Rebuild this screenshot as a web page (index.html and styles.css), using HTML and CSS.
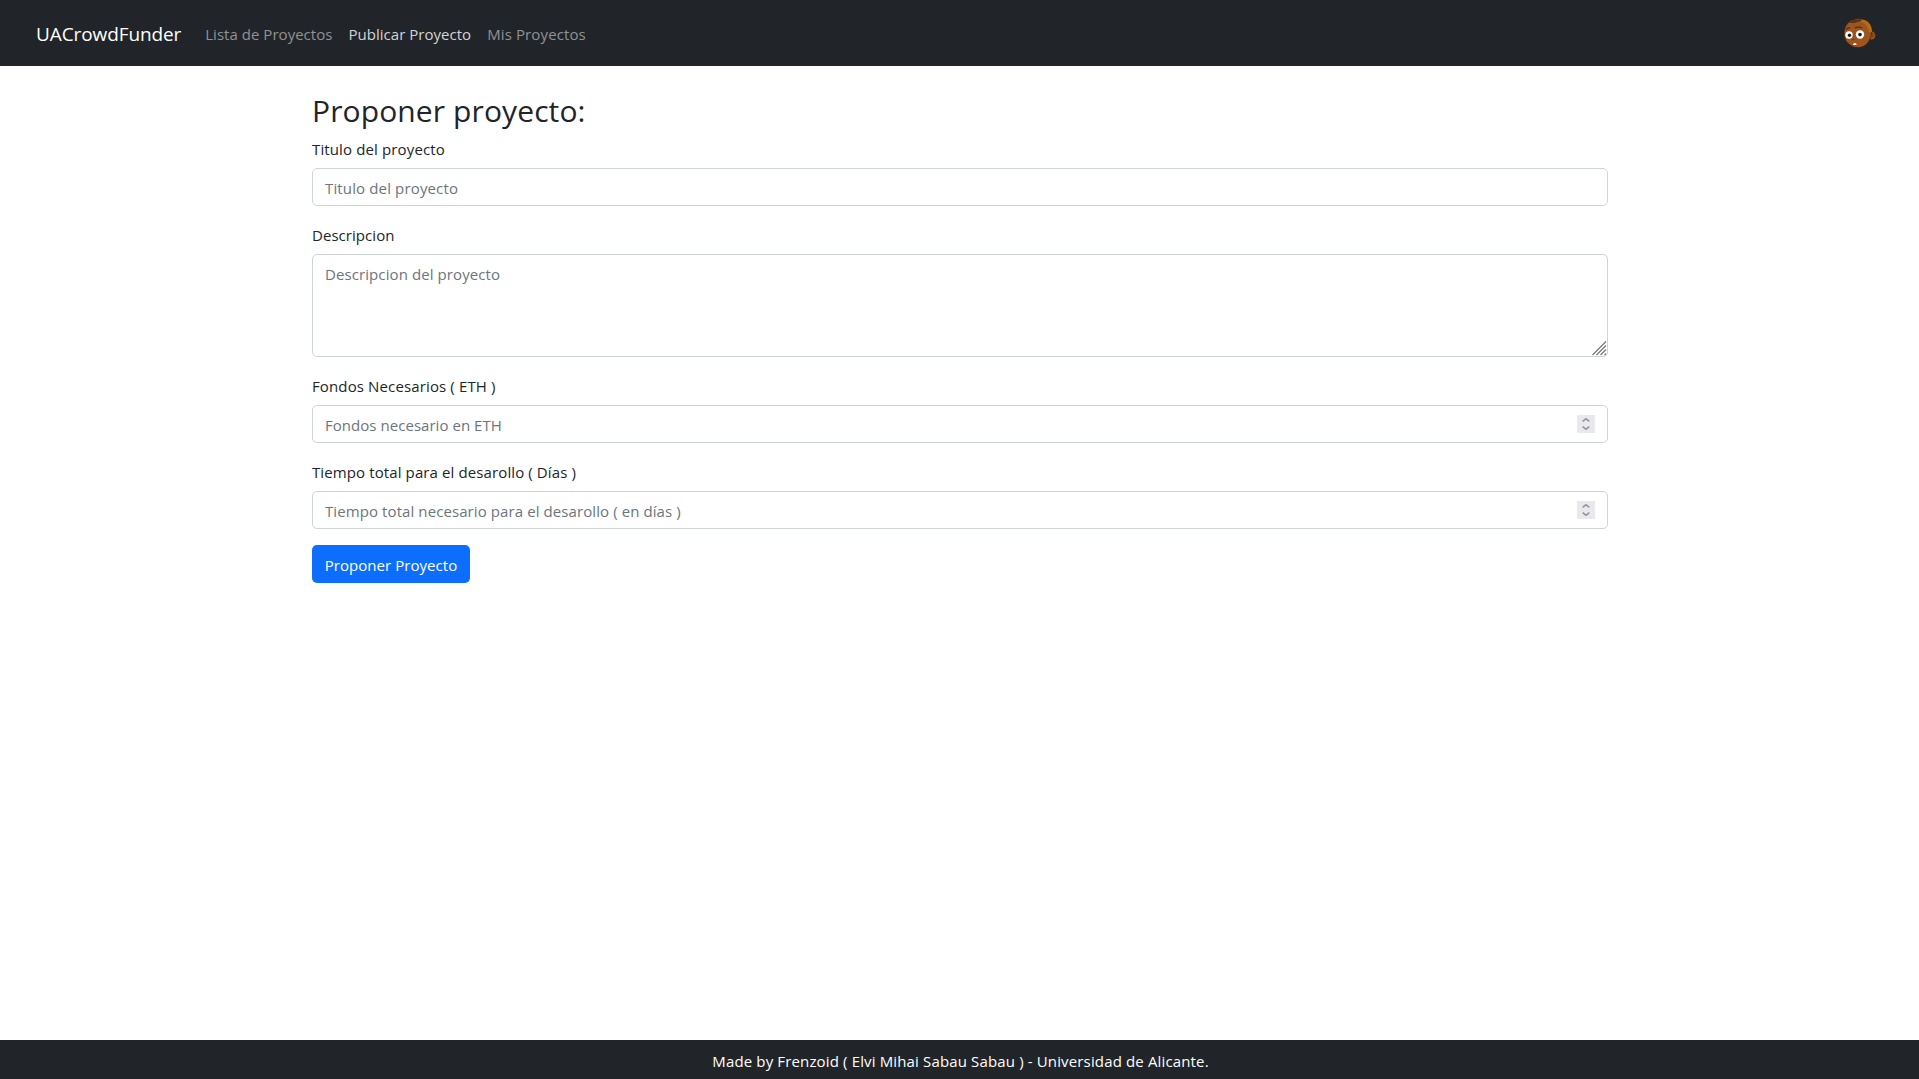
FILE: index.html
```html
<!DOCTYPE html>
<html lang="es">
<head>
<meta charset="utf-8">
<title>UACrowdFunder</title>
<link rel="stylesheet" href="styles.css">
</head>
<body>
<header class="navbar">
  <a class="brand">UACrowdFunder</a>
  <nav class="links">
    <a class="link">Lista de Proyectos</a>
    <a class="link active">Publicar Proyecto</a>
    <a class="link link-mine">Mis Proyectos</a>
  </nav>
  <svg class="avatar" width="34" height="32" viewBox="0 0 34 32">
    <ellipse cx="28.600" cy="18.500" rx="4" ry="4.400" fill="#9b561f" stroke="#382011" stroke-width=".7"/>
    <path d="M27.500 17.500q2-2 3 0q0 2-2 3" fill="none" stroke="#5b2d12" stroke-width=".8"/>
    <path d="M1 17C1 8 6 3 14 2C22 1 28 5 29 14L27.500 21C25 27 21 30.500 15.500 30.500C7 30.500 1 24 1 17Z" fill="#9b561f" stroke="#382011" stroke-width=".7"/>
    <path d="M7 5C12 1.500 20 1 25 5C28 8 29 11 29 15L26 15C25 10 23 7 19 5C14 4.500 10 5.500 7 5Z" fill="#b66c12"/>
    <path d="M6 6L10 3L19 2L18 4L11 6Z" fill="#573012"/>
    <path d="M3 12.500q2-2 4-1.500M12 11q3-2 7 0" fill="none" stroke="#4b260f" stroke-width="1.100"/>
    <circle cx="6" cy="18" r="3.700" fill="#fff"/>
    <circle cx="17" cy="17.500" r="4.200" fill="#fff"/>
    <circle cx="6.500" cy="18.300" r="1.700" fill="#151515"/>
    <circle cx="17" cy="17.600" r="1.800" fill="#151515"/>
    <path d="M9 22.500q2 1 3-1" fill="none" stroke="#633015" stroke-width=".8"/>
    <path d="M9 28q3-3 5 0l-1 1.500h-3z" fill="#d32920"/>
    <path d="M10 27q2-2 3.500 0v1h-3.500z" fill="#fff"/>
  </svg>
</header>
<main class="container">
  <h2 class="title">Proponer proyecto:</h2>
  <form>
    <div class="field">
      <label class="label" for="t">Titulo del proyecto</label>
      <input class="control c-title" id="t" placeholder="Titulo del proyecto">
    </div>
    <div class="field">
      <label class="label l-desc" for="d">Descripcion</label>
      <div class="wrap">
        <textarea class="control area" id="d" placeholder="Descripcion del proyecto"></textarea>
        <svg class="grip" width="15" height="15" viewBox="0 0 15 15"><path d="M.5 14L14 .5M4.500 14L14 4.500M8.500 14L14 8.500M12.500 14L14 12.500" stroke="#777" stroke-width="1.200"/></svg>
      </div>
    </div>
    <div class="field">
      <label class="label" for="f">Fondos Necesarios ( ETH )</label>
      <div class="wrap">
        <input class="control c-funds" id="f" placeholder="Fondos necesario en ETH">
        <svg class="spin" width="18" height="18" viewBox="0 0 18 18"><path d="M0 0h18v18H0z" fill="#e9e9ed"/><path d="M5.700 6.300L9 3.700L12.300 6.300M5.700 11.700L9 14.300L12.300 11.700" fill="none" stroke="#8f8f9d" stroke-width="1.500"/></svg>
      </div>
    </div>
    <div class="field">
      <label class="label l-time" for="p">Tiempo total para el desarollo ( Días )</label>
      <div class="wrap">
        <input class="control" id="p" placeholder="Tiempo total necesario para el desarollo ( en días )">
        <svg class="spin" width="18" height="18" viewBox="0 0 18 18"><path d="M0 0h18v18H0z" fill="#e9e9ed"/><path d="M5.700 6.300L9 3.700L12.300 6.300M5.700 11.700L9 14.300L12.300 11.700" fill="none" stroke="#8f8f9d" stroke-width="1.500"/></svg>
      </div>
    </div>
    <button class="button" type="button">Proponer Proyecto</button>
  </form>
</main>
<footer class="footer">Made by Frenzoid ( Elvi Mihai Sabau Sabau ) - Universidad de Alicante.</footer>
</body>
</html>
```
FILE: styles.css
```css
* { box-sizing: border-box; }
body {
  margin: 0;
  min-height: 100vh;
  display: flex;
  flex-direction: column;
  background: #fff;
  color: #212529;
  font: 400 15px/24px "Open Sans", "Noto Sans", sans-serif;
}
.navbar {
  height: 66px;
  padding: 0 42px 0 36px;
  display: flex;
  align-items: center;
  background: #212529;
}
.brand {
  margin-right: 24px;
  padding-top: 2px;
  color: #fff;
  font-size: 19px;
  line-height: 30px;
  letter-spacing: -.1px;
}
.links { display: flex; gap: 16px; flex: 1; padding-top: 2px; letter-spacing: .03px; }
.link { color: #909294; }
.link.active { color: #d3d3d4; }
.link-mine { letter-spacing: .12px; }
.container { margin: 0 311px 0 312px; padding-top: 24px; flex: 1; }
.title {
  margin: 0 0 6px;
  padding-top: 2px;
  font-size: 30px;
  font-weight: 400;
  line-height: 38px;
  letter-spacing: .11px;
}
.field { margin-bottom: 16px; }
.label { display: block; padding-top: 1px; margin-bottom: 7px; letter-spacing: .13px; }
.l-desc { letter-spacing: .05px; }
.l-time { letter-spacing: .11px; }
.wrap { position: relative; }
.control {
  display: block;
  width: 100%;
  height: 38px;
  margin: 0;
  padding: 7px 12px 5px;
  border: 1px solid #ced4da;
  border-radius: 5px;
  background: #fff;
  font: inherit;
  letter-spacing: .09px;
}
.c-title { letter-spacing: .14px; }
.c-funds { letter-spacing: .04px; }
.control::placeholder { color: #6c757d; opacity: 1; }
.area { height: 103px; resize: none; }
.grip { position: absolute; right: 1px; bottom: 1px; }
.spin { position: absolute; right: 13px; top: 10px; }
.button {
  display: block;
  width: 158px;
  height: 38px;
  padding: 2px 0 0;
  border: 0;
  border-radius: 5px;
  background: #0d6efd;
  color: #fff;
  font: inherit;
  letter-spacing: .05px;
}
.footer {
  height: 39px;
  padding-left: 2px;
  background: #212529;
  color: #fff;
  text-align: center;
  line-height: 42px;
  letter-spacing: .145px;
}
```
